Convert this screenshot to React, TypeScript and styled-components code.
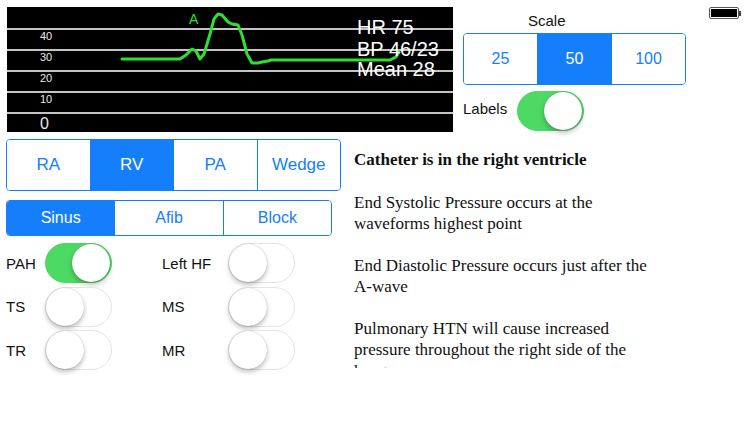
import { useState } from "react";
import styled, { createGlobalStyle } from "styled-components";

const BLUE = "#157efb";
const GREEN = "#4cd964";

const GlobalStyle = createGlobalStyle`
  html, body {
    margin: 0;
    padding: 0;
    background: #ffffff;
  }
  body {
    font-family: "Liberation Sans", Arial, sans-serif;
    width: 750px;
    height: 423px;
    overflow: hidden;
  }
`;

const Screen = styled.div`
  position: relative;
  width: 750px;
  height: 423px;
  background: #fff;
`;

const TopRow = styled.div`
  display: flex;
  align-items: flex-start;
  padding: 7px 0 0 7px;
  gap: 10px;
`;

const Chart = styled.div`
  position: relative;
  width: 446px;
  height: 125px;
  background: #000;
  display: flex;
  flex-direction: column;
`;

const Band = styled.div<{ $first?: boolean; $big?: boolean }>`
  height: ${(p) => (p.$first ? 21 : p.$big ? 18 : 19)}px;
  border-top: ${(p) => (p.$first ? "none" : "2px solid #c4c4c4")};
  padding-left: 33px;
  color: #e8e8e8;
  font-size: ${(p) => (p.$big ? 16 : 11)}px;
  line-height: ${(p) => (p.$big ? 19 : 12)}px;
`;

const Wave = styled.svg`
  position: absolute;
  left: 0;
  top: 0;
`;

const Stats = styled.div`
  position: absolute;
  left: 350px;
  top: 8px;
  color: #fff;
  font-size: 20px;
`;

const StatLine = styled.div<{ $lh: number }>`
  line-height: ${(p) => p.$lh}px;
`;

const ControlPanel = styled.div`
  width: 223px;
  display: flex;
  flex-direction: column;
`;

const Caption = styled.div`
  font-size: 15px;
  color: #111;
  margin: 5px 0 0 65px;
  line-height: 17px;
  height: 21px;
`;

const Segmented = styled.div<{ $height: number; $width: number }>`
  display: flex;
  width: ${(p) => p.$width}px;
  height: ${(p) => p.$height}px;
  border: 1px solid ${BLUE};
  border-radius: 4px;
  overflow: hidden;
  box-sizing: border-box;
`;

const Segment = styled.div<{ $active: boolean; $size: number }>`
  flex: 1;
  display: flex;
  align-items: center;
  justify-content: center;
  font-size: ${(p) => p.$size}px;
  color: ${(p) => (p.$active ? "#fff" : BLUE)};
  background: ${(p) => (p.$active ? BLUE : "#fff")};
  border-left: 1px solid ${BLUE};
  cursor: pointer;
  &:first-child {
    border-left: none;
  }
`;

const SwitchRow = styled.div`
  display: flex;
  align-items: center;
  gap: 10px;
  margin-top: 6px;
  font-size: 15px;
  color: #111;
  & > span {
    margin-bottom: 5px;
  }
`;

const Track = styled.div<{ $on: boolean }>`
  position: relative;
  width: 67px;
  height: 40px;
  border-radius: 20px;
  box-sizing: border-box;
  background: ${(p) => (p.$on ? GREEN : "#fff")};
  border: ${(p) => (p.$on ? `1px solid ${GREEN}` : "1.5px solid #e4e4e4")};
  cursor: pointer;
  flex-shrink: 0;
`;

const Knob = styled.div<{ $on: boolean }>`
  position: absolute;
  top: 0;
  left: ${(p) => (p.$on ? "26px" : "0")};
  width: 38px;
  height: 38px;
  border-radius: 50%;
  background: #fff;
  box-shadow: 0 3px 5px rgba(0, 0, 0, 0.25), 0 0 1px rgba(0, 0, 0, 0.3);
`;

const Battery = styled.div`
  margin-left: 13px;
  display: flex;
  align-items: center;
`;

const BatteryBody = styled.div`
  width: 30px;
  height: 12px;
  box-sizing: border-box;
  border: 1px solid #555;
  border-radius: 2px;
  padding: 1px;
  & > div {
    width: 100%;
    height: 100%;
    background: #000;
  }
`;

const BatteryNub = styled.div`
  width: 2px;
  height: 5px;
  background: #444;
`;

const BottomRow = styled.div`
  display: flex;
  padding: 7px 0 0 6px;
  gap: 13px;
`;

const LeftColumn = styled.div`
  width: 335px;
  display: flex;
  flex-direction: column;
  gap: 9px;
`;

const ToggleGrid = styled.div`
  display: grid;
  grid-template-columns: 156px 1fr;
  row-gap: 3.5px;
  margin-top: -2px;
`;

const ToggleItem = styled.div<{ $labelWidth: number }>`
  display: flex;
  align-items: center;
  height: 40px;
  font-size: 15px;
  color: #111;
  & > span {
    width: ${(p) => p.$labelWidth}px;
  }
`;

const Notes = styled.div`
  width: 305px;
  height: 229px;
  overflow: hidden;
  box-sizing: border-box;
  font-family: "Liberation Serif", "Times New Roman", serif;
  font-size: 17px;
  line-height: 21.5px;
  color: #111;
  padding-top: 10px;
`;

const Heading = styled.p`
  margin: 0 0 21px 0;
  font-weight: bold;
`;

const Para = styled.p`
  margin: 0 0 20px 0;
`;

function Switch({ on, onToggle }: { on: boolean; onToggle: () => void }) {
  return (
    <Track $on={on} onClick={onToggle}>
      <Knob $on={on} />
    </Track>
  );
}

const wavePoints = [
  [115, 52], [173, 52], [179, 48], [185, 42], [189, 44], [193, 52], [197, 47],
  [203, 27], [207, 12], [211, 7], [215, 8], [221, 15], [225, 17], [231, 18],
  [235, 28], [240, 47], [245, 56], [251, 56], [255, 55], [261, 54], [264, 53],
  [383, 53], [389, 50], [392, 45],
];

const bands = ["", "40", "30", "20", "10"];

export default function App() {
  const [scale, setScale] = useState("50");
  const [site, setSite] = useState("RV");
  const [rhythm, setRhythm] = useState("Sinus");
  const [labels, setLabels] = useState(true);
  const [flags, setFlags] = useState<Record<string, boolean>>({
    PAH: true,
    "Left HF": false,
    TS: false,
    MS: false,
    TR: false,
    MR: false,
  });

  const toggle = (k: string) => setFlags({ ...flags, [k]: !flags[k] });

  return (
    <Screen>
      <GlobalStyle />
      <TopRow>
        <Chart>
          {bands.map((b, i) => (
            <Band key={i} $first={i === 0}>
              {labels ? b : ""}
            </Band>
          ))}
          <Band $big>{labels ? "0" : ""}</Band>
          <Wave width="446" height="125" viewBox="0 0 446 125">
            <polyline
              points={wavePoints.map((p) => p.join(",")).join(" ")}
              fill="none"
              stroke="#2fe02f"
              strokeWidth="3"
              strokeLinejoin="round"
              strokeLinecap="round"
            />
            <text x="182" y="17" fill="#2fe02f" fontSize="14" fontFamily="Liberation Sans, sans-serif">
              A
            </text>
          </Wave>
          <Stats>
            <StatLine $lh={24}>HR 75</StatLine>
            <StatLine $lh={20}>BP 46/23</StatLine>
            <StatLine $lh={20}>Mean 28</StatLine>
          </Stats>
        </Chart>
        <ControlPanel>
          <Caption>Scale</Caption>
          <Segmented $height={52} $width={223}>
            {["25", "50", "100"].map((s) => (
              <Segment key={s} $size={16} $active={scale === s} onClick={() => setScale(s)}>
                {s}
              </Segment>
            ))}
          </Segmented>
          <SwitchRow>
            <span>Labels</span>
            <Switch on={labels} onToggle={() => setLabels(!labels)} />
          </SwitchRow>
        </ControlPanel>
        <Battery>
          <BatteryBody>
            <div />
          </BatteryBody>
          <BatteryNub />
        </Battery>
      </TopRow>
      <BottomRow>
        <LeftColumn>
          <Segmented $height={52} $width={335}>
            {["RA", "RV", "PA", "Wedge"].map((s) => (
              <Segment key={s} $size={17} $active={site === s} onClick={() => setSite(s)}>
                {s}
              </Segment>
            ))}
          </Segmented>
          <Segmented $height={36} $width={326}>
            {["Sinus", "Afib", "Block"].map((s) => (
              <Segment key={s} $size={16} $active={rhythm === s} onClick={() => setRhythm(s)}>
                {s}
              </Segment>
            ))}
          </Segmented>
          <ToggleGrid>
            {["PAH", "Left HF", "TS", "MS", "TR", "MR"].map((k, i) => (
              <ToggleItem key={k} $labelWidth={i % 2 === 0 ? 39 : 66}>
                <span>{k}</span>
                <Switch on={flags[k]} onToggle={() => toggle(k)} />
              </ToggleItem>
            ))}
          </ToggleGrid>
        </LeftColumn>
        <Notes>
          <Heading>Catheter is in the right ventricle</Heading>
          <Para>End Systolic Pressure occurs at the waveforms highest point</Para>
          <Para>End Diastolic Pressure occurs just after the A-wave</Para>
          <Para>Pulmonary HTN will cause increased pressure throughout the right side of the heart</Para>
        </Notes>
      </BottomRow>
    </Screen>
  );
}
